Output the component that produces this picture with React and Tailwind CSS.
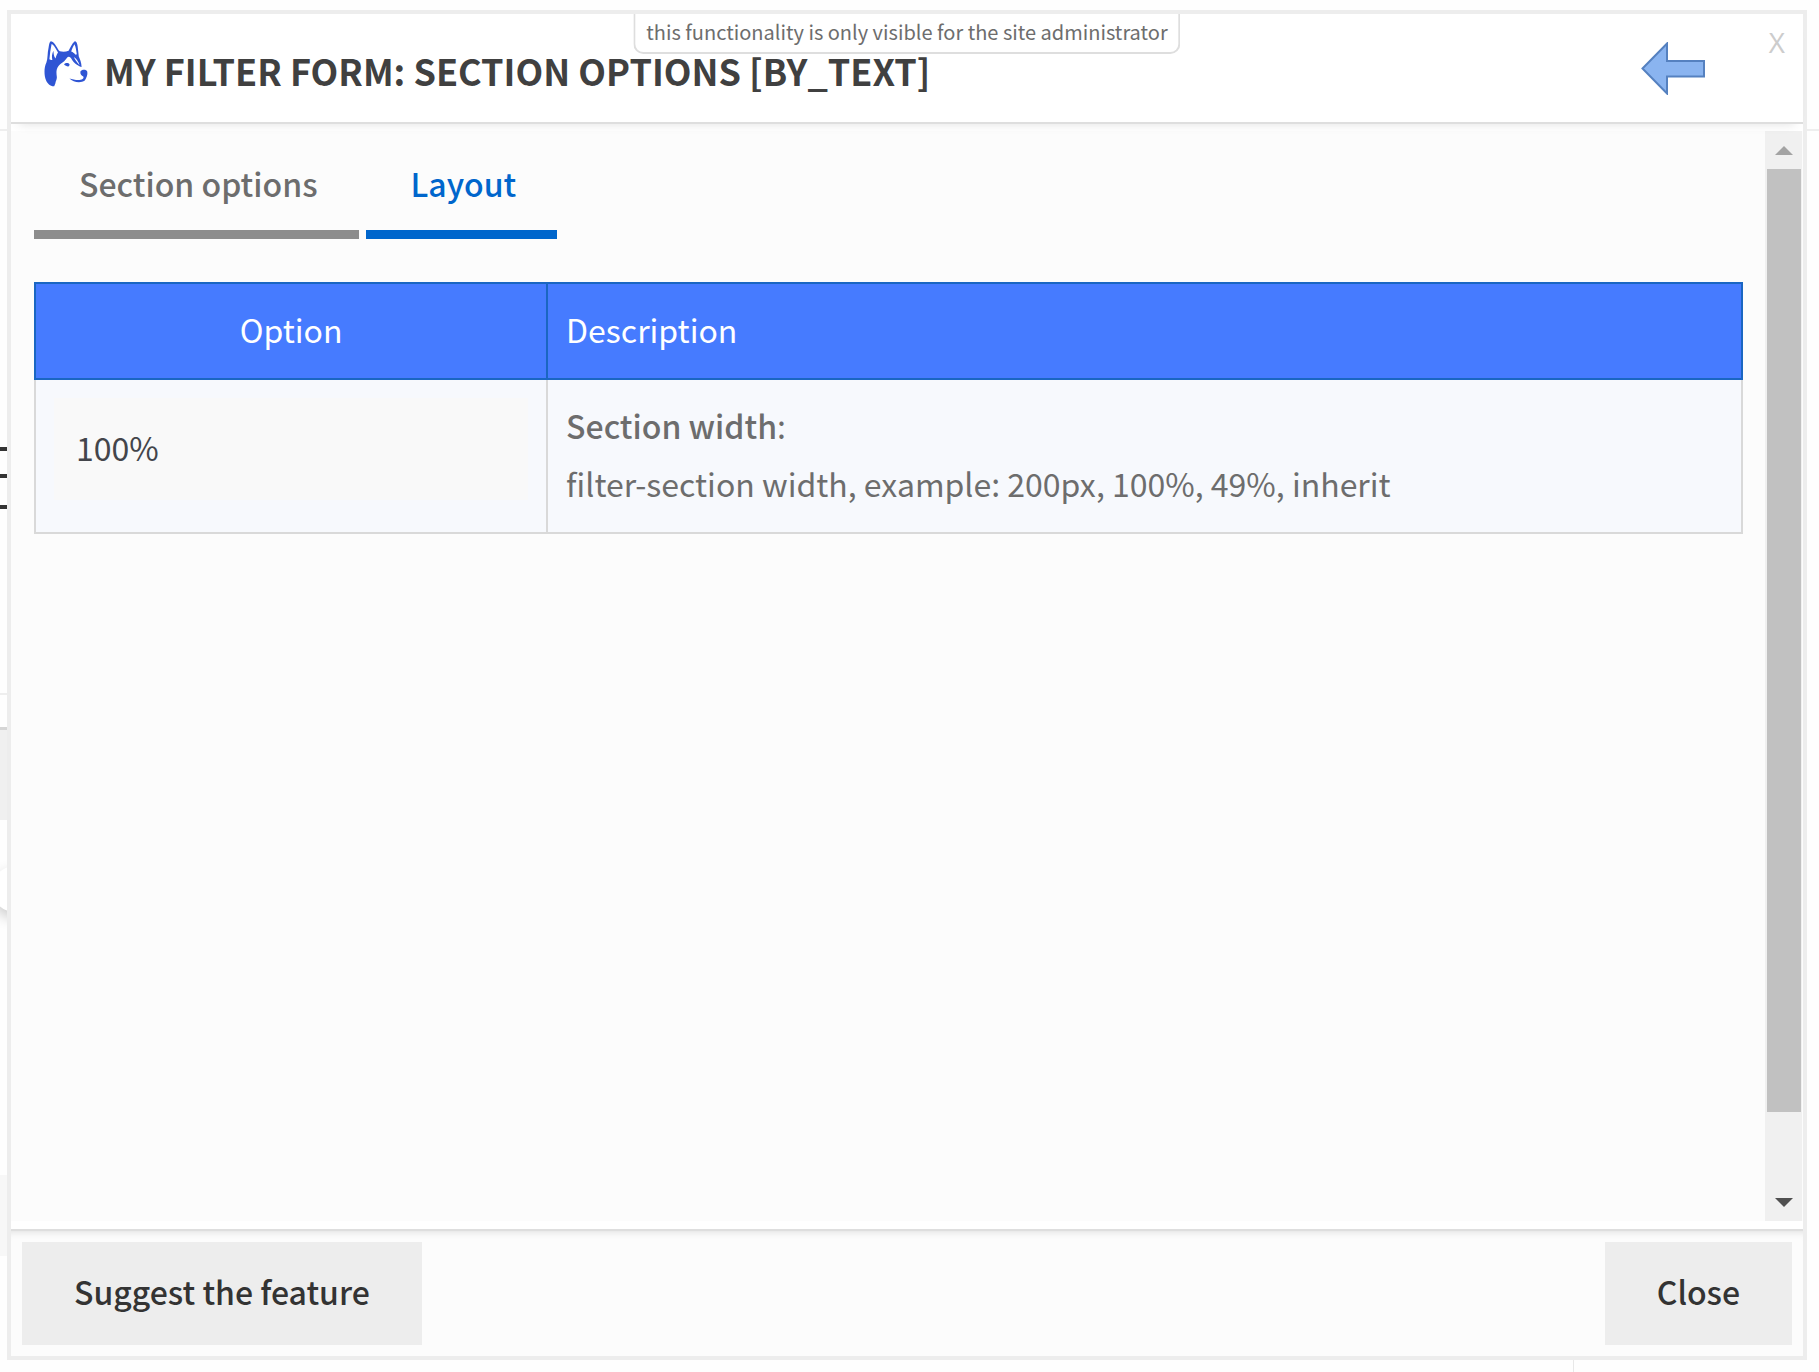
import { useState } from "react";

const tabs = ["Section options", "Layout"];

const buttonClass =
  "bg-[#ededed] px-[52px] pt-[22px] pb-[27px] text-[32px] leading-[54px] font-medium text-[#333333]";

function HuskyLogo() {
  return (
    <svg viewBox="0 0 44 46" className="h-[46px] w-11 shrink-0" aria-hidden="true">
      <path
        fill="#2f55d4"
        fillRule="evenodd"
        d="M6.5 0.4C8.2 -.2 10.7 2.6 12.4 5.4C13.5 7.2 14.6 9.2 15.8 10.2C18.5 10.9 22 10.8 24.6 9.7C26.3 6.6 28.1 2.2 30.5 0.4C32.4 -.2 33.2 2.2 33.6 5C34.1 8.5 34.4 12 34.8 15.6C36 18.4 37.4 21.5 37.6 26C35 25.4 30.8 22.6 28.8 20C27.4 18 26.6 15.4 24.6 15.8C22.8 16.2 22.2 18.4 20.2 20.2C18 22 15.4 23 13.8 26C12 29.4 12.4 32.5 12.8 35.5C13.2 38.3 11.6 39.8 11.4 42.2L10.2 45.2C6.4 45.5 3.4 42.5 2 39.2C-.2 34 .1 26 2.4 21.4C4 17.6 3.2 12 4.6 6.4C5 4 5.2 1.2 6.5 0.4ZM7.6 3C6.6 7.8 5.8 13 5.4 18.2C6.4 18.9 7.6 19.2 8.4 18.7C7.4 15.4 8.2 12.6 9.4 9.7C9.7 13.2 9.9 15.6 11.6 17.4C12 15.4 13 13 14 11.6C12.2 8.4 10 4 7.6 3ZM30.4 3.3C29.2 5.4 27.9 8.2 27.2 10.5C29 11.2 30.6 12.4 31.6 13.8L32.8 13.3C32.2 9.8 31.8 5.6 30.4 3.3ZM30 16C30.4 18.4 33 21.2 35.6 24.2C34.7 21 32.4 17.6 30 16Z"
      />
      <path fill="#2f55d4" d="M20 23.3C21.7 21.4 24.5 21.6 25.6 23.4L25 25.3C23.4 25.7 21.5 25.1 20 23.3Z" />
      <path
        fill="#2f55d4"
        d="M36.4 30.6C37.8 28.2 42.4 28.2 43.3 30.8C43.9 34 42.4 37 40.8 39.5C36.5 42.6 29.1 41.2 25.4 37.4C29.5 38.6 35.4 40 38.6 38C39.4 37.2 39.8 36.4 39.3 35.4C37.6 35.2 35.9 33.2 36.4 30.6Z"
      />
    </svg>
  );
}

// parts of the page that stay visible around the dialog
function PageBehind() {
  return (
    <div className="absolute inset-0 overflow-hidden bg-[#fefefe]" aria-hidden="true">
      <div className="mt-[129px] h-0.5 bg-[#eeeeee]" />
      <div className="w-5">
        <div className="mt-[316px] h-1 bg-[#333333]" />
        <div className="mt-[23px] h-1 bg-[#333333]" />
        <div className="mt-[27px] h-1 bg-[#333333]" />
        <div className="mt-[184px] h-0.5 bg-[#eeeeee]" />
        <div className="mt-8 h-[93px] border-t-[3px] border-[#d5d5d5] bg-[#f0f0f0]" />
        <div className="mt-[46px] -ml-2 size-[46px] rounded-full bg-white shadow-[0_6px_14px_rgba(0,0,0,0.2)]" />
        <div className="mt-[263px] h-[81px] bg-[#f7f7f7]" />
      </div>
      <div className="mr-[245px] h-[200px] border-r border-[#e8e8e8]" />
    </div>
  );
}

function ScrollRail() {
  return (
    <div className="mr-px flex w-[37px] shrink-0 flex-col items-center bg-[#f0f0f0]" aria-hidden="true">
      <div className="flex h-[38px] shrink-0 items-center">
        <svg viewBox="0 0 18 9" className="h-[9px] w-[18px]">
          <path d="M9 0L18 9H0Z" fill="#a3a3a3" />
        </svg>
      </div>
      <div className="flex w-[34px] flex-1 flex-col">
        <div className="h-[93%] bg-[#c1c1c1]" />
      </div>
      <div className="flex h-[38px] shrink-0 items-center">
        <svg viewBox="0 0 18 9" className="h-[9px] w-[18px]">
          <path d="M0 0H18L9 9Z" fill="#505050" />
        </svg>
      </div>
    </div>
  );
}

function LayoutOptions() {
  const [width, setWidth] = useState("100%");

  return (
    <table className="mt-[43px] w-full table-fixed border-collapse text-[32px] text-[#6d6d6d]">
      <thead>
        <tr className="bg-[#467bff] text-white">
          <th className="w-[30%] border-2 border-[#1a66c2] px-[18px] pt-4 pb-5 leading-[58px] font-normal">
            Option
          </th>
          <th className="border-2 border-[#1a66c2] px-[18px] pt-4 pb-5 text-left leading-[58px] font-normal">
            Description
          </th>
        </tr>
      </thead>
      <tbody>
        <tr className="bg-[#f7f9fd]">
          <td className="border-2 border-[#d9d9d9] px-[18px] pt-[18px] pb-8 align-top">
            <input
              type="text"
              aria-label="Section width"
              className="block h-[102px] w-full bg-[#f9f9f9] px-[22px] pb-1 text-[#43454b] outline-none"
              value={width}
              onChange={(e) => setWidth(e.target.value)}
            />
          </td>
          <td className="border-2 border-[#d9d9d9] px-[18px] pt-4 pb-5 align-top leading-[58px]">
            <strong className="font-medium">Section width</strong>:
            <p>filter-section width, example: 200px, 100%, 49%, inherit</p>
          </td>
        </tr>
      </tbody>
    </table>
  );
}

export default function App() {
  const [active, setActive] = useState("Layout");

  return (
    <div className="relative flex h-screen pt-2.5 pr-3 pb-3 pl-[7px] font-['Noto_Sans_CJK_SC',sans-serif]">
      <PageBehind />
      <div
        role="dialog"
        aria-labelledby="dialog-title"
        className="relative flex min-w-0 flex-1 flex-col border-4 border-[#ededed] bg-white"
      >
        <header className="relative z-10 flex h-[110px] shrink-0 border-b-2 border-[#dedede] shadow-[0_8px_10px_-8px_rgba(0,0,0,0.12)]">
          <div className="flex flex-1 items-start pt-[27px] pl-[33px]">
            <HuskyLogo />
            <h1 id="dialog-title" className="ml-4 text-[36px] leading-[58px] font-bold text-[#404040]">
              MY FILTER FORM: SECTION OPTIONS [BY_TEXT]
            </h1>
          </div>
          <button type="button" aria-label="Back" className="mr-16 self-start pt-7">
            <svg viewBox="0 0 64 53" className="h-[53px] w-16">
              <path
                d="M1.5 26.5L26 1.5V19H63V34.5H26V51.5Z"
                fill="#8ab4f0"
                stroke="#5581c0"
                strokeWidth="2"
              />
            </svg>
          </button>
          <button
            type="button"
            aria-label="Close dialog"
            className="mr-[18px] self-start pt-1.5 font-['Open_Sans',sans-serif] text-[28px] leading-[44px] font-medium text-[#cccccc]"
          >
            X
          </button>
          <p className="absolute top-0 left-1/2 h-10 -translate-x-1/2 rounded-b-[10px] border-2 border-t-0 border-[#dedede] bg-white px-[11px] text-[20px] leading-[36px] whitespace-nowrap text-[#6d6d6d]">
            this functionality is only visible for the site administrator
          </p>
        </header>

        <div className="mt-[7px] mb-2 flex min-h-0 flex-1 bg-[#fcfcfc]">
          <main className="min-w-0 flex-1 pt-[5px] pr-[22px] pl-[23px]">
            <div role="tablist" className="flex gap-[7px]">
              {tabs.map((tab) => (
                <button
                  key={tab}
                  type="button"
                  role="tab"
                  aria-selected={tab === active}
                  className={
                    "border-b-[9px] py-5 pr-[41px] pl-[45px] text-[32px] leading-[54px] font-medium " +
                    (tab === active
                      ? "border-[#0066cc] text-[#0066cc]"
                      : "border-[#8d8d8d] text-[#6d6d6d]")
                  }
                  onClick={() => setActive(tab)}
                >
                  {tab}
                </button>
              ))}
            </div>
            {active === "Layout" ? <LayoutOptions /> : null}
          </main>
          <ScrollRail />
        </div>

        <footer className="flex shrink-0 justify-between border-t-2 border-[#dedede] bg-[#fcfcfc] p-[11px] shadow-[inset_0_8px_8px_-8px_rgba(0,0,0,0.15)]">
          <button type="button" className={buttonClass}>
            Suggest the feature
          </button>
          <button type="button" className={buttonClass}>
            Close
          </button>
        </footer>
      </div>
    </div>
  );
}
